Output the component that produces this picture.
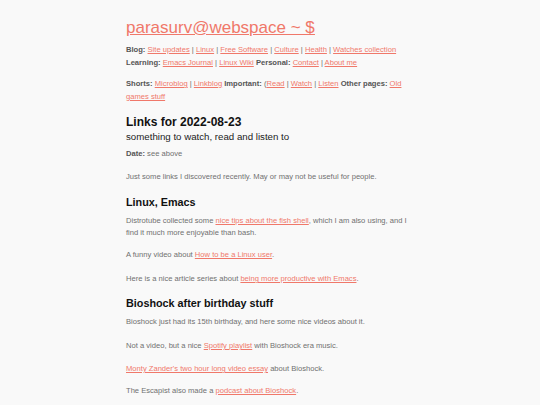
import React from "react";

const A = ({ children }: { children: React.ReactNode }) => (
  <a href="#" className="text-[#f0786a] underline">
    {children}
  </a>
);

const B = ({ children }: { children: React.ReactNode }) => (
  <b className="font-bold text-[#555]">{children}</b>
);

export default function App() {
  return (
    <div
      className="min-h-[405px] bg-[#f9f9f9] text-[#707070]"
      style={{ fontFamily: '"Liberation Sans", Arial, sans-serif' }}
    >
      <div className="w-[288px] mx-auto pt-[16px]">
        <h1 className="text-[17px] leading-[23px] text-[#f0786a] underline">
          <a href="#">parasurv@webspace ~ $</a>
        </h1>
        <nav className="mt-[4px] text-[7.6px] leading-[13px]">
          <p>
            <B>Blog:</B> <A>Site updates</A> | <A>Linux</A> | <A>Free Software</A> |{" "}
            <A>Culture</A> | <A>Health</A> | <A>Watches collection</A>{" "}
            <B>Learning:</B> <A>Emacs Journal</A> | <A>Linux Wiki</A> <B>Personal:</B>{" "}
            <A>Contact</A> | <A>About me</A>
          </p>
          <p className="mt-[8px]">
            <B>Shorts:</B> <A>Microblog</A> | <A>Linkblog</A> <B>Important:</B> (
            <A>Read</A> | <A>Watch</A> | <A>Listen</A> <B>Other pages:</B>{" "}
            <A>Old games stuff</A>
          </p>
        </nav>
        <h2 className="mt-[11px] text-[12px] leading-[16px] font-bold text-[#111]">
          Links for 2022-08-23
        </h2>
        <p className="mt-[1px] text-[9.7px] leading-[12px] text-[#222]">
          something to watch, read and listen to
        </p>
        <div className="text-[7.6px] leading-[12px]">
          <p className="mt-[5px]">
            <B>Date:</B> see above
          </p>
          <p className="mt-[11px]">
            Just some links I discovered recently. May or may not be useful for people.
          </p>
        </div>
        <h3 className="mt-[12px] text-[10.8px] leading-[14px] font-bold text-[#111]">
          Linux, Emacs
        </h3>
        <div className="text-[7.6px] leading-[12px]">
          <p className="mt-[6px]">
            Distrotube collected some <A>nice tips about the fish shell</A>, which I am also
            using, and I find it much more enjoyable than bash.
          </p>
          <p className="mt-[10px]">
            A funny video about <A>How to be a Linux user</A>.
          </p>
          <p className="mt-[12px]">
            Here is a nice article series about <A>being more productive with Emacs</A>.
          </p>
        </div>
        <h3 className="mt-[11px] text-[10.8px] leading-[14px] font-bold text-[#111]">
          Bioshock after birthday stuff
        </h3>
        <div className="text-[7.6px] leading-[12px]">
          <p className="mt-[6px]">
            Bioshock just had its 15th birthday, and here some nice videos about it.
          </p>
          <p className="mt-[12px]">
            Not a video, but a nice <A>Spotify playlist</A> with Bioshock era music.
          </p>
          <p className="mt-[11px]">
            <A>Monty Zander's two hour long video essay</A> about Bioshock.
          </p>
          <p className="mt-[10px]">
            The Escapist also made a <A>podcast about Bioshock</A>.
          </p>
        </div>
      </div>
    </div>
  );
}
